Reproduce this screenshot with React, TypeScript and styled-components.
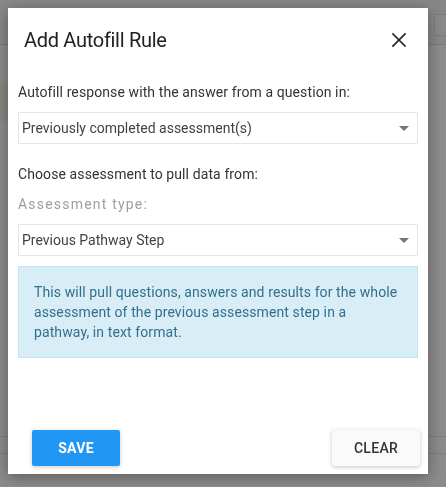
import React from 'react'
import styled, { createGlobalStyle } from 'styled-components'

const GlobalStyle = createGlobalStyle`
  html, body {
    margin: 0;
    padding: 0;
    width: 100%;
    height: 100%;
    overflow: hidden;
  }
  body {
    font-family: Roboto, 'Liberation Sans', Arial, sans-serif;
    background: #fdfdfd;
  }
  * {
    box-sizing: border-box;
  }
`

const Page = styled.div`
  width: 446px;
  height: 487px;
  display: flex;
  flex-direction: column;
  background: #fdfdfd;
`

const PageHeader = styled.div`
  height: 45px;
  flex-shrink: 0;
  background: #f5f5f5;
  border-bottom: 1px solid #dcdcdc;
  display: flex;
  justify-content: flex-end;
  padding: 14px 0 0 0;
`

const HeaderTab = styled.div`
  width: 12px;
  height: 22px;
  border: 1px solid #e0e0e0;
  border-right: none;
  background: #fafafa;
`

const PageBody = styled.div`
  flex: 1;
  display: flex;
  flex-direction: column;
  padding-top: 36px;
`

const LeftHint = styled.div`
  width: 10px;
  height: 40px;
  background: #f4f6e8;
`

const PageFooter = styled.div`
  margin-top: auto;
  height: 18px;
  margin-bottom: 33px;
  border-top: 1px solid #e4e4e4;
  border-bottom: 1px solid #e4e4e4;
`

const Backdrop = styled.div`
  position: fixed;
  inset: 0;
  background: rgba(0, 0, 0, 0.45);
  display: flex;
  align-items: flex-start;
  padding: 8px 0 0 8px;
`

const Dialog = styled.div`
  width: 420px;
  height: 466px;
  background: #ffffff;
  box-shadow: 0 3px 14px rgba(0, 0, 0, 0.35);
  display: flex;
  flex-direction: column;
`

const TitleBar = styled.div`
  display: flex;
  align-items: center;
  justify-content: space-between;
  height: 64px;
  padding: 0 20px 0 16px;
`

const Title = styled.h2`
  margin: 0;
  font-size: 20px;
  font-weight: 400;
  color: #212121;
  letter-spacing: -0.3px;
`

const CloseButton = styled.button`
  border: none;
  background: transparent;
  padding: 0;
  width: 18px;
  height: 18px;
  display: flex;
  align-items: center;
  justify-content: center;
  cursor: pointer;
`

const Content = styled.div`
  flex: 1;
  padding: 10px 10px 0 10px;
  display: flex;
  flex-direction: column;
`

const Label = styled.div<{ muted?: boolean }>`
  font-size: 14px;
  line-height: 20px;
  color: ${({ muted }) => (muted ? '#9e9e9e' : '#333333')};
  letter-spacing: ${({ muted }) => (muted ? '1.2px' : '0.1px')};
  margin-bottom: 10px;
`

const Select = styled.div<{ spaced?: boolean }>`
  height: 32px;
  border: 1px solid #e5e5e5;
  display: flex;
  align-items: center;
  justify-content: space-between;
  padding: 0 8px 0 3px;
  font-size: 14px;
  color: #424242;
  margin-bottom: ${({ spaced }) => (spaced ? '20px' : '10px')};
`

const Caret = styled.span`
  width: 0;
  height: 0;
  border-left: 5px solid transparent;
  border-right: 5px solid transparent;
  border-top: 5px solid #757575;
`

const InfoBox = styled.div`
  background: #d9edf7;
  border: 1px solid #bce8f1;
  color: #31708f;
  font-size: 14px;
  line-height: 20px;
  letter-spacing: 0.1px;
  padding: 15px 18px 15px 15px;
`

const Actions = styled.div`
  display: flex;
  justify-content: space-between;
  align-items: center;
  padding: 0 8px 8px 24px;
`

const Button = styled.button<{ primary?: boolean }>`
  width: 88px;
  height: 36px;
  border: none;
  border-radius: 2px;
  font-family: Roboto, 'Liberation Sans', Arial, sans-serif;
  font-size: 14px;
  font-weight: ${({ primary }) => (primary ? 700 : 500)};
  letter-spacing: 0.3px;
  text-transform: uppercase;
  color: ${({ primary }) => (primary ? '#ffffff' : '#333333')};
  background: ${({ primary }) => (primary ? '#2196f3' : '#fafafa')};
  box-shadow: 0 1px 4px rgba(0, 0, 0, 0.22);
  cursor: pointer;
`

const CloseIcon = () => (
  <svg width="16" height="16" viewBox="0 0 16 16">
    <path d="M2 2 L14 14 M14 2 L2 14" stroke="#222" strokeWidth="1.7" strokeLinecap="square" />
  </svg>
)

export default function App() {
  return (
    <>
      <GlobalStyle />
      <Page>
        <PageHeader>
          <HeaderTab />
        </PageHeader>
        <PageBody>
          <LeftHint />
          <PageFooter />
        </PageBody>
      </Page>
      <Backdrop>
        <Dialog>
          <TitleBar>
            <Title>Add Autofill Rule</Title>
            <CloseButton aria-label="Close">
              <CloseIcon />
            </CloseButton>
          </TitleBar>
          <Content>
            <Label>Autofill response with the answer from a question in:</Label>
            <Select spaced>
              <span>Previously completed assessment(s)</span>
              <Caret />
            </Select>
            <Label>Choose assessment to pull data from:</Label>
            <Label muted>Assessment type:</Label>
            <Select>
              <span>Previous Pathway Step</span>
              <Caret />
            </Select>
            <InfoBox>
              This will pull questions, answers and results for the whole assessment of the
              previous assessment step in a pathway, in text format.
            </InfoBox>
          </Content>
          <Actions>
            <Button primary>Save</Button>
            <Button>Clear</Button>
          </Actions>
        </Dialog>
      </Backdrop>
    </>
  )
}
